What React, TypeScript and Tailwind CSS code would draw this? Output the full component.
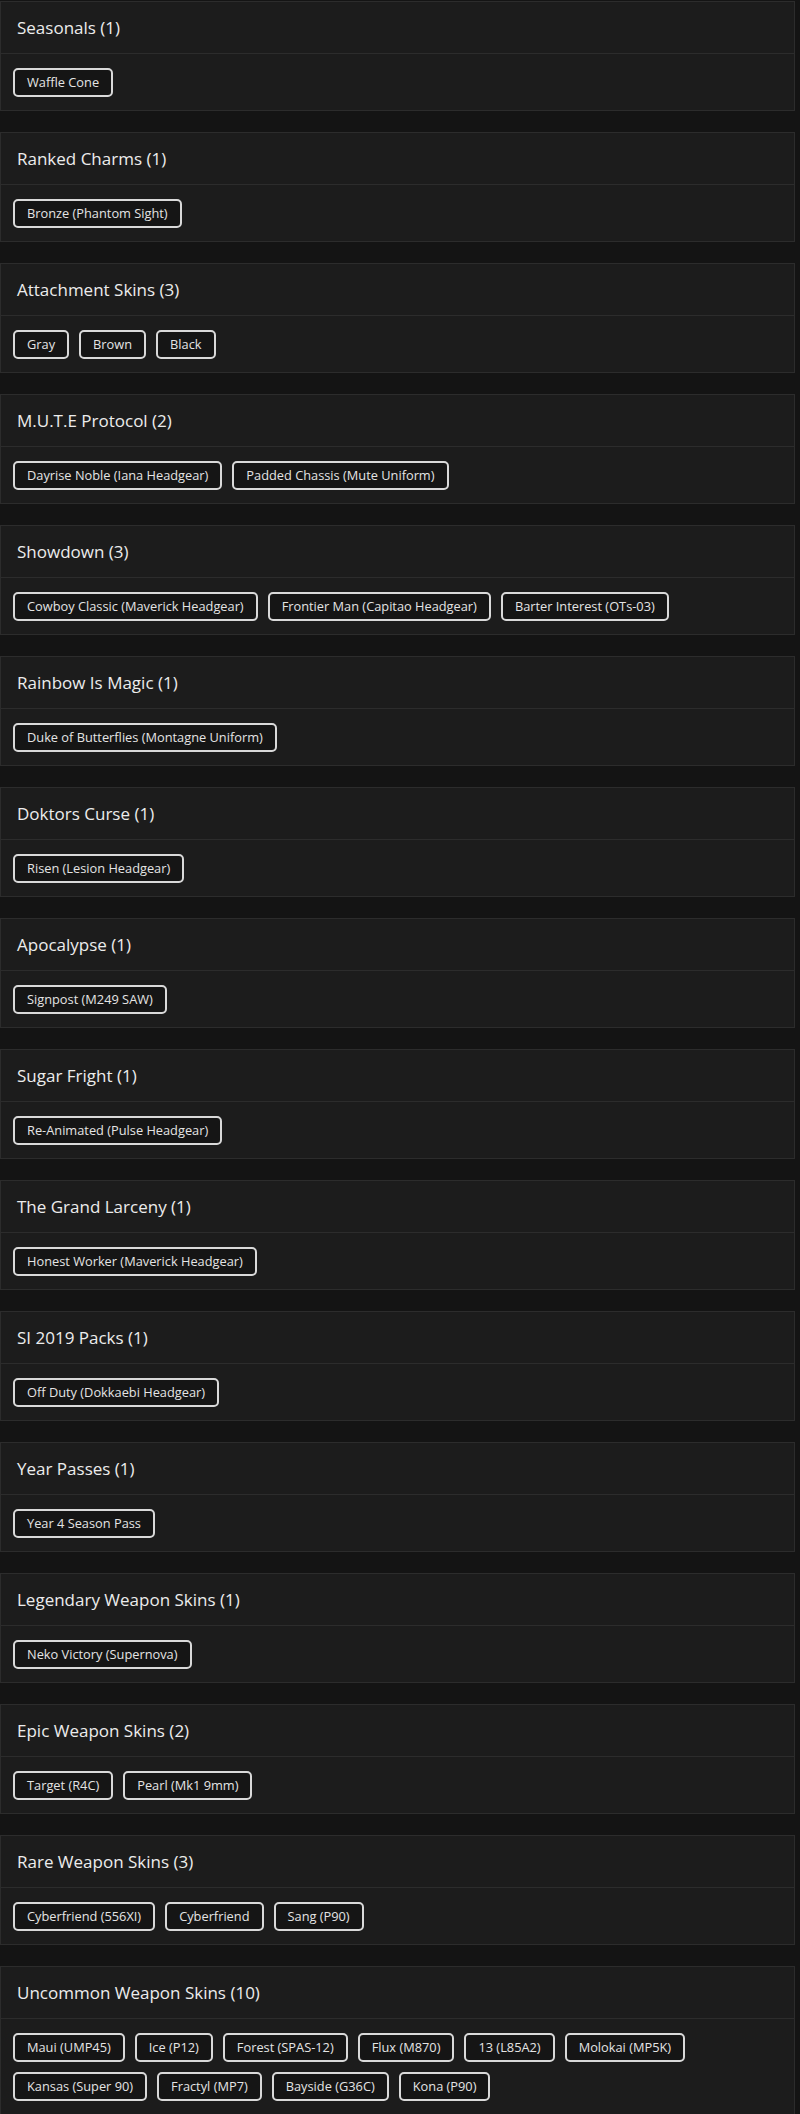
import React from "react";

type Section = {
  title: string;
  items: string[];
};

const sections: Section[] = [
  { title: "Seasonals", items: ["Waffle Cone"] },
  { title: "Ranked Charms", items: ["Bronze (Phantom Sight)"] },
  { title: "Attachment Skins", items: ["Gray", "Brown", "Black"] },
  {
    title: "M.U.T.E Protocol",
    items: ["Dayrise Noble (Iana Headgear)", "Padded Chassis (Mute Uniform)"],
  },
  {
    title: "Showdown",
    items: [
      "Cowboy Classic (Maverick Headgear)",
      "Frontier Man (Capitao Headgear)",
      "Barter Interest (OTs-03)",
    ],
  },
  { title: "Rainbow Is Magic", items: ["Duke of Butterflies (Montagne Uniform)"] },
  { title: "Doktors Curse", items: ["Risen (Lesion Headgear)"] },
  { title: "Apocalypse", items: ["Signpost (M249 SAW)"] },
  { title: "Sugar Fright", items: ["Re-Animated (Pulse Headgear)"] },
  { title: "The Grand Larceny", items: ["Honest Worker (Maverick Headgear)"] },
  { title: "SI 2019 Packs", items: ["Off Duty (Dokkaebi Headgear)"] },
  { title: "Year Passes", items: ["Year 4 Season Pass"] },
  { title: "Legendary Weapon Skins", items: ["Neko Victory (Supernova)"] },
  { title: "Epic Weapon Skins", items: ["Target (R4C)", "Pearl (Mk1 9mm)"] },
  {
    title: "Rare Weapon Skins",
    items: ["Cyberfriend (556XI)", "Cyberfriend", "Sang (P90)"],
  },
  {
    title: "Uncommon Weapon Skins",
    items: [
      "Maui (UMP45)",
      "Ice (P12)",
      "Forest (SPAS-12)",
      "Flux (M870)",
      "13 (L85A2)",
      "Molokai (MP5K)",
      "Kansas (Super 90)",
      "Fractyl (MP7)",
      "Bayside (G36C)",
      "Kona (P90)",
    ],
  },
];

const Chip = ({ label }: { label: string }) => (
  <span className="flex items-center h-[29px] px-3 border-2 border-[#d9d9d9] rounded-[5px] bg-[#151515] text-[12.8px] text-[#e4e4e4] leading-none whitespace-nowrap">
    {label}
  </span>
);

const SectionCard = ({ section }: { section: Section }) => (
  <div className="border border-[#2c2c2c] bg-[#1c1c1c]">
    {/* Header */}
    <div className="h-[52px] flex items-center px-4 border-b border-[#2c2c2c]">
      <h2 className="text-[17px] text-[#ececec] font-medium">
        {section.title} ({section.items.length})
      </h2>
    </div>

    {/* Items */}
    <div className="flex flex-wrap gap-x-[10px] gap-y-[10px] px-3 pt-[14px] pb-[13px]">
      {section.items.map((item, idx) => (
        <Chip key={idx} label={item} />
      ))}
    </div>
  </div>
);

const App = () => {
  return (
    <div
      className="min-h-[2114px] bg-[#141414] pt-px pr-[5px] flex flex-col gap-[21px]"
      style={{ fontFamily: '"Open Sans", "Liberation Sans", sans-serif' }}
    >
      {sections.map((section) => (
        <SectionCard key={section.title} section={section} />
      ))}
    </div>
  );
};

export default App;
